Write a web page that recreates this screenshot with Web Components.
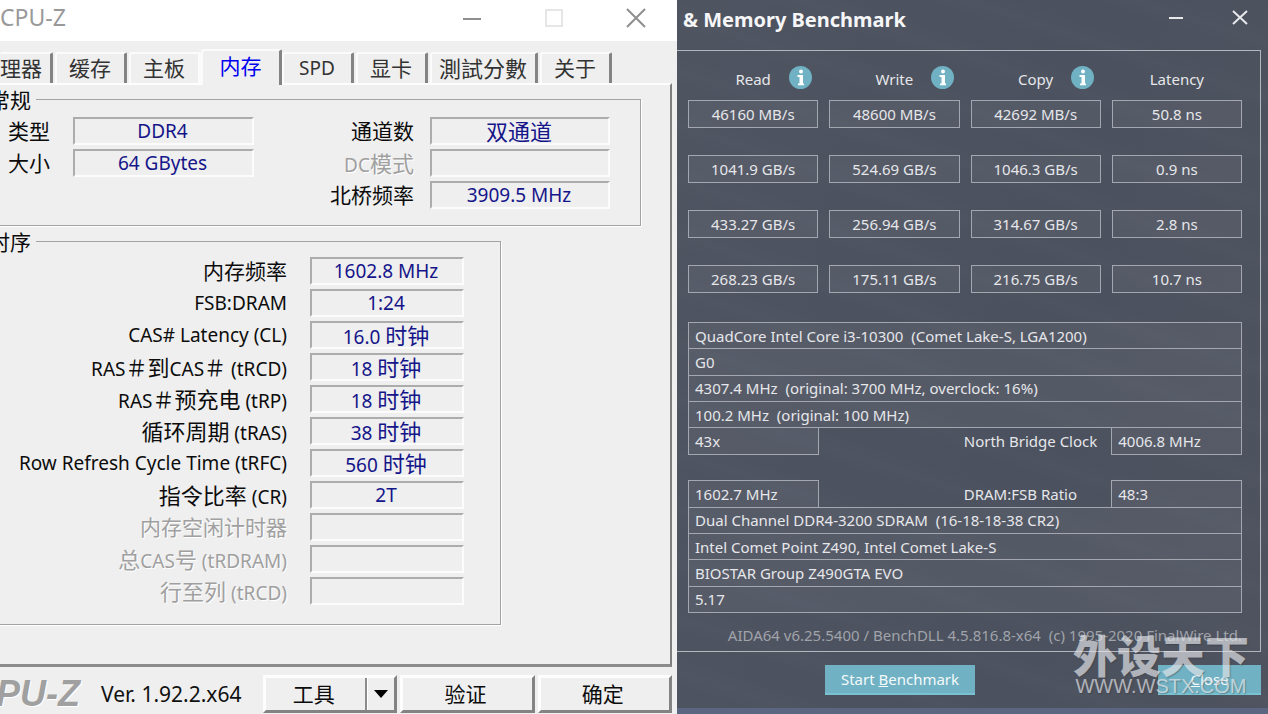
<!DOCTYPE html>
<html lang="zh-CN">
<head>
<meta charset="utf-8">
<title>CPU-Z / Memory Benchmark</title>
<style>
  html, body { margin: 0; height: 100%; }
  body { font-family: "Noto Sans", "Noto Sans CJK SC", sans-serif; overflow: hidden; }
</style>
</head>
<body>
<app-desktop></app-desktop>

<script>
// Wraps runs of Han characters so they can be set a little larger than Latin text.
const mix = t => t.replace(/[\u3400-\u9fff＃]+/g, m => `<span class="zh">${m}</span>`);
const define = (name, render) => customElements.define(name, class extends HTMLElement {
  connectedCallback() {
    if (this.shadowRoot) return;
    this.attachShadow({ mode: 'open' }).innerHTML = render(this);
  }
});

define('value-row', el => {
  const off = el.hasAttribute('disabled');
  const label = el.getAttribute('label');
  return `<style>
    :host { display: grid; grid-template-columns: var(--row-cols, 1fr 154px); height: 28px; font-size: 19px; line-height: 28px; }
    label { text-align: var(--label-align, right); padding-right: var(--label-gap, 23px); white-space: pre; color: ${off ? '#a0a0a0' : '#0c0c0c'}; ${off ? 'text-shadow: 1px 1px #fff;' : ''} }
    output { box-sizing: border-box; height: 28px; line-height: 24px; padding-right: 2px; text-align: center; white-space: nowrap;
      color: #15158a; border: 2px solid; border-color: #acacac #fcfcfc #fcfcfc #acacac; }
    .zh { font-size: 21px; }
    output .zh, .mixed .zh { font-size: 22px; }
  </style><label for="v" class="${/[A-Z]/.test(label) ? 'mixed' : ''}">${mix(label)}</label><output id="v">${mix(el.getAttribute('value') || '')}</output>`;
});

define('group-box', el => `<style>
    :host { display: block; }
    fieldset { margin: 0 0 0 -24px; min-width: 0; border: 1px solid #a3a3a3; box-shadow: 1px 1px #fff; padding: var(--group-pad); }
    legend { margin-left: calc(11px - var(--legend-inset)); padding: 0 5px 0 0; height: 28px; line-height: 30px; font-size: 21px; color: #0c0c0c; }
  </style><fieldset><legend>${el.getAttribute('legend')}</legend><slot></slot></fieldset>`);

define('tab-strip', el => `<style>
    :host { display: block; }
    div { display: flex; align-items: flex-end; gap: 2px; height: 42px; }
    button { font: inherit; font-size: 21px; line-height: 26px; box-sizing: border-box; height: 31px; min-width: 72px; padding: 0 8px 2px 7px; margin: 0;
      color: #333; background: #efefef; border: 0 solid; border-width: 2px 3px 0 2px; border-color: #fbfbfb #838383 #fbfbfb #fbfbfb; border-radius: 3px 2px 0 0; white-space: nowrap; }
    button:first-child { min-width: 53px; padding: 0 8px 2px 0; border-left: 0; text-align: left; }
    button.lat { font-size: 19px; }
    button.long { font-size: 22px; }
    button[aria-selected=true] { height: 36px; min-width: 81px; margin: 0 -2px -2px; padding-bottom: 4px; color: #0000f0; position: relative; }
    button.nb { border-right-color: #fbfbfb; }
  </style><div role="tablist">${el.getAttribute('tabs').split(',').map((t, i) =>
    `<button role="tab" class="${/^[A-Z]/.test(t) ? 'lat' : t.length > 3 ? 'long' : ''}${i === 2 ? ' nb' : ''}" aria-selected="${t === el.getAttribute('selected')}">${t}</button>`).join('')}</div>`);

define('bevel-button', el => `<style>
    :host { display: flex; flex: 1; }
    .b { display: flex; flex: 1; box-sizing: border-box; height: 38px; border: 3px solid; border-color: #fdfdfd #838383 #838383 #fdfdfd; background: #efefef; }
    button { font: inherit; font-size: 21px; line-height: 30px; color: #0c0c0c; background: none; border: 0; padding: 0 4px 0 0; flex: 1; }
    .drop { flex: 0 0 29px; padding: 0; border-left: 2px solid #8c8c8c; box-shadow: inset 1px 0 #fff; display: flex; align-items: center; justify-content: center; }
  </style><div class="b"><button><slot></slot></button>${el.hasAttribute('split')
    ? '<button class="drop" aria-label="展开"><svg width="14" height="8"><path d="M0 0h14L7 8z" fill="#000"/></svg></button>' : ''}</div>`);

define('cpuz-window', () => `<style>
    :host { display: flex; flex-direction: column; min-width: 0; overflow: hidden; background: #efefef; }
    header { display: flex; align-items: center; height: 41px; flex: none; background: #fff; padding-right: 31px; box-sizing: border-box; }
    h1 { flex: 1; margin: 0 0 8px; font-size: 23px; font-weight: 400; line-height: 30px; color: #999; }
    header button { border: 0; background: none; padding: 0; width: 20px; height: 20px; margin: 0 0 5px 62px; }
    svg { display: block; }
    main { flex: 1; box-sizing: border-box; margin-right: 5px; border: solid; border-width: 2px 2px 3px 0; border-color: #fdfdfd #7f7f7f #8c8c8c; }
    .common { margin-right: 29px; --group-pad: 4px 30px 16px 31px; --legend-inset: 30px; }
    .timing { margin: 1px 169px 0 0; --group-pad: 2px 36px 19px 25px; --legend-inset: 24px; }
    .cols { display: grid; grid-template-columns: 246fr 356fr; }
    .stack { display: flex; flex-direction: column; gap: 4px; }
    .l { --row-cols: 65px 1fr; --label-align: left; --label-gap: 0px; }
    .r { --row-cols: 176px 1fr; --label-gap: 16px; }
    footer { display: flex; align-items: center; flex: none; height: 47px; box-sizing: border-box; padding: 6px 5px 0 0; white-space: nowrap; }
    .logo { font: italic bold 36px/38px "Liberation Sans", sans-serif; color: #a0a0a0; text-shadow: 1px 1px #fff; margin-left: -4px; width: 105px; }
    .ver { font-size: 21px; line-height: 28px; color: #111; width: 162px; }
    .acts { display: flex; flex: 1; gap: 3px; }
  </style>
  <header><h1>CPU-Z</h1>
    <button aria-label="最小化"><svg width="20" height="20"><path d="M1 11h18" stroke="#8f8f8f" stroke-width="2"/></svg></button>
    <button aria-label="最大化"><svg width="20" height="20"><path d="M2 2h16v16H2z" fill="none" stroke="#e6e6e6" stroke-width="2"/></svg></button>
    <button aria-label="关闭"><svg width="20" height="20"><path d="M1 1l18 18M19 1L1 19" stroke="#8f8f8f" stroke-width="2"/></svg></button>
  </header>
  <tab-strip tabs="理器,缓存,主板,内存,SPD,显卡,測試分數,关于" selected="内存"></tab-strip>
  <main>
    <group-box class="common" legend="常规"><div class="cols">
      <div class="stack l"><value-row label="类型" value="DDR4"></value-row><value-row label="大小" value="64 GBytes"></value-row></div>
      <div class="stack r"><value-row label="通道数" value="双通道"></value-row><value-row label="DC模式" disabled></value-row><value-row label="北桥频率" value="3909.5 MHz"></value-row></div>
    </div></group-box>
    <group-box class="timing" legend="时序"><div class="stack">
      <value-row label="内存频率" value="1602.8 MHz"></value-row>
      <value-row label="FSB:DRAM" value="1:24"></value-row>
      <value-row label="CAS# Latency (CL)" value="16.0 时钟"></value-row>
      <value-row label="RAS＃到CAS＃ (tRCD)" value="18 时钟"></value-row>
      <value-row label="RAS＃预充电 (tRP)" value="18 时钟"></value-row>
      <value-row label="循环周期 (tRAS)" value="38 时钟"></value-row>
      <value-row label="Row Refresh Cycle Time (tRFC)" value="560 时钟"></value-row>
      <value-row label="指令比率 (CR)" value="2T"></value-row>
      <value-row label="内存空闲计时器" disabled></value-row>
      <value-row label="总CAS号 (tRDRAM)" disabled></value-row>
      <value-row label="行至列 (tRCD)" disabled></value-row>
    </div></group-box>
  </main>
  <footer><span class="logo">PU-Z</span><span class="ver">Ver. 1.92.2.x64</span>
    <div class="acts"><bevel-button split>工具</bevel-button><bevel-button>验证</bevel-button><bevel-button>确定</bevel-button></div>
  </footer>`);

define('bench-table', () => {
  const info = '<svg width="23" height="23" viewBox="0 0 23 23"><circle cx="11.5" cy="11.5" r="11.5" fill="#70b1c3"/><circle cx="12" cy="5.500" r="2" fill="#fff"/><path d="M8.500 9h5.500v8.500h1v1.800h-6v-1.800h1.500v-6.500h-2z" fill="#fff"/></svg>';
  const rows = [['46160 MB/s', '48600 MB/s', '42692 MB/s', '50.8 ns'], ['1041.9 GB/s', '524.69 GB/s', '1046.3 GB/s', '0.9 ns'],
    ['433.27 GB/s', '256.94 GB/s', '314.67 GB/s', '2.8 ns'], ['268.23 GB/s', '175.11 GB/s', '216.75 GB/s', '10.7 ns']];
  return `<style>
    :host { display: block; }
    table, tbody { display: grid; }
    tbody { row-gap: 27px; }
    tr { display: grid; grid-template-columns: repeat(4, 1fr); column-gap: 11px; }
    th { display: grid; grid-template-columns: 1fr auto 1fr; align-items: center; height: 36px; margin-bottom: 3px; padding: 0; font-weight: 400; }
    th span { grid-column: 2; }
    th button { border: 0; background: none; padding: 0; margin-left: 18px; width: 23px; height: 23px; margin-bottom: 3px; }
    svg { display: block; }
    td { box-sizing: border-box; height: 28px; line-height: 26px; padding: 0; text-align: center; border: 1px solid #a4a7af; background: #ffffff0d; }
  </style><table><thead><tr>${['Read', 'Write', 'Copy', 'Latency'].map((h, i) =>
    `<th><span>${h}</span>${i < 3 ? `<button aria-label="Info">${info}</button>` : ''}</th>`).join('')}</tr></thead>
  <tbody>${rows.map(r => `<tr>${r.map(c => `<td>${c}</td>`).join('')}</tr>`).join('')}</tbody></table>`;
});

define('info-list', () => {
  const full = t => `<div class="c full">${t}</div>`;
  const split = (a, b, c) => `<div class="c">${a}</div><div class="k">${b}</div><div class="c">${c}</div>`;
  return `<style>
    :host { display: grid; grid-template-columns: 131fr 293fr 131fr; grid-auto-rows: minmax(24px, 1fr); }
    div { display: flex; align-items: center; white-space: pre; box-sizing: border-box; margin-bottom: -1px; line-height: 20px; min-width: 0; }
    .c { padding-left: 6px; border: 1px solid #a4a7af; background: #ffffff0d; background-clip: padding-box; }
    .full, .gap { grid-column: 1 / -1; }
    .k { padding-left: 145px; }
  </style>${full('QuadCore Intel Core i3-10300  (Comet Lake-S, LGA1200)')}${full('G0')}${full('4307.4 MHz  (original: 3700 MHz, overclock: 16%)')}${full('100.2 MHz  (original: 100 MHz)')}${split('43x', 'North Bridge Clock', '4006.8 MHz')}<div class="gap"></div>${split('1602.7 MHz', 'DRAM:FSB Ratio', '48:3')}${full('Dual Channel DDR4-3200 SDRAM  (16-18-18-38 CR2)')}${full('Intel Comet Point Z490, Intel Comet Lake-S')}${full('BIOSTAR Group Z490GTA EVO')}${full('5.17')}`;
});

define('site-mark', () => `<style>
    :host { display: block; color: #e4e6ea; opacity: .66; text-align: center; pointer-events: none; text-shadow: 1px 1px 1px #3338; }
    b { display: block; font: 900 44px/44px "Noto Sans CJK SC", sans-serif; }
    span { display: block; font: 20px/20px "Liberation Sans", sans-serif; }
  </style><b>外设天下</b><span>WWW.WSTX.COM</span>`);

define('bench-window', () => `<style>
    :host { display: flex; flex-direction: column; min-width: 0; position: relative; box-sizing: border-box; border-bottom: 6px solid #5b6780; color: #e6e7ea; font-size: 15px; line-height: 20px;
      background: repeating-linear-gradient(18deg, #ffffff00 0 20px, #ffffff03 34px, #ffffff00 52px), linear-gradient(100deg, #4f5461, #4b515e 60%, #4e535f); }
    header { display: flex; align-items: center; height: 50px; flex: none; box-sizing: border-box; padding: 0 20px 10px 6px; }
    h1 { flex: 1; margin: 0; font-size: 20px; line-height: 28px; font-weight: 700; color: #f6f6f8; }
    header button { border: 0; background: none; padding: 0; width: 16px; height: 16px; margin: 0 0 6px 48px; }
    svg { display: block; }
    main { flex: 1; display: flex; flex-direction: column; margin-right: 7px; padding: 10px 18px 5px 11px; border: solid #b3b6bd; border-width: 1px 1px 1px 0; }
    info-list { flex: 1; margin-top: 29px; }
    p { margin: 12px 0 0; text-align: right; color: #a0a3aa; line-height: 22px; white-space: pre; }
    footer { display: flex; justify-content: space-between; flex: none; padding: 13px 7px 13px 148px; }
    .act { font: inherit; height: 30px; padding: 0; border: 0; border-bottom: 2px solid #79c2d2; color: #f4fafb; background: #70b1c3; }
    .start { width: 150px; } .close { width: 103px; }
    site-mark { position: absolute; right: 17px; bottom: 12px; width: 180px; }
  </style>
  <header><h1>&amp; Memory Benchmark</h1>
    <button aria-label="Minimize"><svg width="16" height="16"><path d="M1 9h14" stroke="#e8e9ec" stroke-width="2"/></svg></button>
    <button aria-label="Close window"><svg width="16" height="16"><path d="M1 2l14 13M15 2L1 15" stroke="#e8e9ec" stroke-width="2"/></svg></button>
  </header>
  <main><bench-table></bench-table><info-list></info-list>
    <p>AIDA64 v6.25.5400 / BenchDLL 4.5.816.8-x64  (c) 1995-2020 FinalWire Ltd.</p></main>
  <footer><button class="act start">Start <u>B</u>enchmark</button><button class="act close"><u>C</u>lose</button></footer>
  <site-mark></site-mark>`);

define('app-desktop', () => `<style>
    :host { display: grid; grid-template-columns: 677fr 591fr; min-height: 100vh; }
  </style><cpuz-window></cpuz-window><bench-window></bench-window>`);
</script>
</body>
</html>
